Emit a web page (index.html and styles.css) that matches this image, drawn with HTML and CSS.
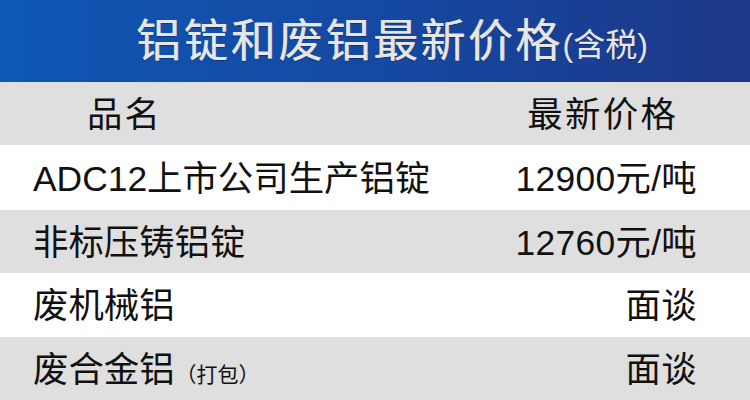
FILE: index.html
```html
<!DOCTYPE html>
<html lang="zh-CN">
<head>
<meta charset="utf-8">
<title>铝锭和废铝最新价格</title>
<link rel="stylesheet" href="styles.css">
</head>
<body>
<div class="page">
  <div class="banner">
    <span class="title">铝锭和废铝最新价格</span><span class="tax">(含税)</span>
  </div>
  <div class="row head">
    <span class="name">品名</span>
    <span class="price">最新价格</span>
  </div>
  <div class="row white r1">
    <span class="name">ADC12上市公司生产铝锭</span>
    <span class="price">12900元/吨</span>
  </div>
  <div class="row gray r2">
    <span class="name">非标压铸铝锭</span>
    <span class="price">12760元/吨</span>
  </div>
  <div class="row white r3">
    <span class="name">废机械铝</span>
    <span class="price">面谈</span>
  </div>
  <div class="row gray r4">
    <span class="name">废合金铝<span class="note">（打包）</span></span>
    <span class="price">面谈</span>
  </div>
</div>
</body>
</html>
```

FILE: styles.css
```css
html, body {
  margin: 0;
  padding: 0;
}
body {
  width: 750px;
  height: 400px;
  overflow: hidden;
  font-family: "Liberation Sans", "Noto Sans CJK SC", sans-serif;
  color: #111;
  background: #fff;
}
.page {
  display: flex;
  flex-direction: column;
  width: 750px;
  height: 400px;
}
.banner {
  height: 82px;
  flex: none;
  display: flex;
  align-items: center;
  padding-left: 136px;
  box-sizing: border-box;
  background: linear-gradient(90deg, #0e57b4 0%, #1549a2 50%, #1d3789 100%);
  color: #e6e6e6;
}
.title {
  font-size: 45px;
  letter-spacing: 2.4px;
  font-weight: 400;
  line-height: 1;
  text-shadow: 0 1px 1px rgba(0, 0, 0, 0.3), 0.4px 0 0 #e6e6e6;
}
.tax {
  font-size: 32px;
  line-height: 1;
  margin-top: 8px;
  text-shadow: 0 1px 1px rgba(0, 0, 0, 0.3);
}
.row {
  display: flex;
  justify-content: space-between;
  align-items: center;
  padding: 0 53px 0 33px;
  box-sizing: border-box;
  font-size: 35.4px;
  line-height: 1;
  flex: none;
}
.head {
  height: 63px;
  background: #dfdfdf;
  padding-left: 87px;
  padding-right: 74px;
  letter-spacing: 2px;
}
.head .price {
  letter-spacing: 2.4px;
  margin-right: -2.4px;
}
.r1 { height: 65px; }
.r2 { height: 63px; }
.r3 { height: 64px; }
.r4 { height: 63px; }
.white { background: #ffffff; }
.gray { background: #dfdfdf; }
.name, .price {
  display: flex;
  align-items: baseline;
  padding-top: 4px;
}
.price {
  letter-spacing: 0.3px;
}
.note {
  font-size: 21px;
  margin-left: 1px;
}
```
